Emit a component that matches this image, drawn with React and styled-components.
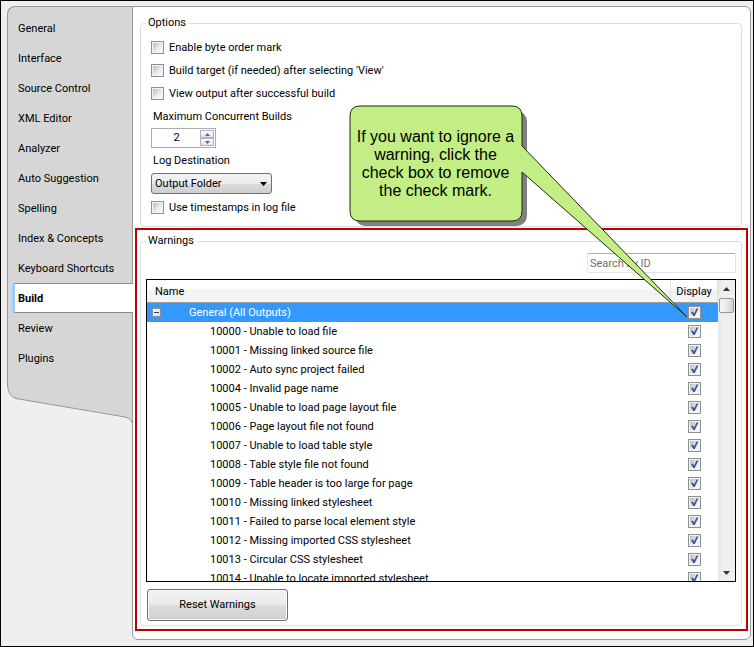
import React from "react";
import styled, { createGlobalStyle, css } from "styled-components";

const GlobalStyle = createGlobalStyle`
  *, *::before, *::after { box-sizing: border-box; }
  body {
    margin: 0;
    background: #efefef;
    color: #000;
    font: 11px/16px Roboto, Tahoma, sans-serif;
  }
  button, input, select { font: inherit; color: inherit; }
`;

const Window = styled.main`
  position: relative;
  display: flex;
  height: 100vh;
  min-height: 480px;
  padding: 5px 2px 6px 6px;
  border: 1px solid #000;
  background: #efefef;
`;

const Sidebar = styled.nav`
  display: flex;
  flex-direction: column;
  flex: none;
  width: 125px;
`;

const TabList = styled.ul`
  margin: 0;
  padding: 6px 0 8px 4px;
  list-style: none;
  background: #d6d6d6;
  border: 1px solid #999;
  border-width: 1px 0 0 1px;
  border-top-left-radius: 8px;
`;

const Tab = styled.a`
  display: flex;
  align-items: center;
  height: 30px;
  padding: 2px 0 0 6px;
  color: #000;
  text-decoration: none;
  white-space: nowrap;
  ${({ $active }) =>
    $active &&
    css`
      position: relative;
      margin-right: -1px;
      padding-left: 3px;
      border: 1px solid #8c8c8c;
      border-width: 1px 0 1px 3px;
      border-left-color: #99ccff;
      border-radius: 3px 0 0 3px;
      background: #fff;
      font-weight: bold;
    `}
`;

const SidebarFoot = styled.svg`
  display: block;
  flex: none;
`;

const Panel = styled.section`
  display: flex;
  flex-direction: column;
  flex: 1;
  min-width: 0;
  padding: 8px 2px 8px;
  background: #fff;
  border: 1px solid #999;
  border-radius: 0 6px 6px 6px;
`;

const Legend = styled.legend`
  margin-left: 0;
  padding: 0 3px 0 2px;
`;

const Group = styled.fieldset`
  min-width: 0;
  margin: 0;
  padding: 0 5px 4px;
  border: 1px solid #d5dfe5;
  border-radius: 4px;
`;

const OptionsGroup = styled(Group)`
  flex: none;
  margin: 0 6px 0 5px;
  padding: 5px 10px 7px;
  ${Legend} { margin-left: -5px; }
`;

const CheckRow = styled.label`
  display: flex;
  align-items: center;
  gap: 5px;
  height: 23px;
`;

const CheckWrap = styled.span`
  display: inline-grid;
  width: 13px;
  height: 13px;
  > * { grid-area: 1 / 1; }
`;

const CheckInput = styled.input`
  appearance: none;
  width: 13px;
  height: 13px;
  margin: 0;
  padding: 1px;
  border: 1px solid #8e8f8f;
  background:
    linear-gradient(135deg, #b4bcc6, #eceef0 60%, #fafafa) content-box,
    #f4f4f4;
`;

const CheckMark = styled.svg`
  width: 13px;
  height: 13px;
  pointer-events: none;
  visibility: hidden;
  ${CheckInput}:checked + & { visibility: visible; }
`;

const FieldLabel = styled.label`
  display: block;
  height: 23px;
  padding-left: 2px;
  line-height: 23px;
`;

const Spinner = styled.div`
  display: flex;
  width: 65px;
  height: 20px;
  margin-bottom: 1px;
  padding: 1px;
  border: 1px solid #abadb3;
  background: #fff;
`;

const SpinnerInput = styled.input`
  flex: 1;
  width: 0;
  padding: 0;
  border: 0;
  outline: 0;
  background: none;
  text-align: center;
`;

const SpinnerButtons = styled.div`
  display: grid;
  grid-template-rows: 1fr 1fr;
  width: 14px;
`;

const SpinnerButton = styled.button`
  display: grid;
  place-items: center;
  min-height: 0;
  padding: 0;
  border: 1px solid #b4b4b8;
  background: linear-gradient(#fafafa, #e4e4e6);
`;

const SelectWrap = styled.div`
  position: relative;
  width: 121px;
  margin: 1px 0 2px;
`;

const Select = styled.select`
  appearance: none;
  display: block;
  width: 100%;
  height: 21px;
  padding: 0 20px 0 3px;
  border: 1px solid #707070;
  border-radius: 3px;
  background: linear-gradient(#f3f3f3, #ebebeb 50%, #dcdcdc 50%, #cfcfcf);
`;

const SelectArrow = styled.svg`
  position: absolute;
  right: 5px;
  top: 9px;
  pointer-events: none;
`;

const Highlight = styled.div`
  display: flex;
  flex-direction: column;
  flex: 1;
  min-height: 0;
  margin-top: 1px;
  padding: 3px 4px 3px 3px;
  border: 2px solid #c00000;
`;

const WarningsGroup = styled(Group)`
  display: flex;
  flex-direction: column;
  flex: 1;
  min-height: 0;
`;

const Search = styled.input`
  flex: none;
  align-self: flex-end;
  width: 149px;
  height: 20px;
  margin: 4px 0 6px;
  padding: 0 2px;
  border: 1px solid #e2e3ea;
  border-top-color: #abadb3;
  border-radius: 2px;
  background: #fff;
  &::placeholder { color: #6d6d6d; opacity: 1; }
`;

const ListBox = styled.div`
  display: flex;
  flex: 1 1 0;
  min-height: 0;
  border: 1px solid #000;
  background: #fff;
`;

const Viewport = styled.div`
  flex: 1;
  min-width: 0;
  overflow: hidden;
`;

const Table = styled.table`
  width: 100%;
  table-layout: fixed;
  border-collapse: separate;
  border-spacing: 0;
`;

const DisplayCol = styled.col`
  width: 48px;
`;

const HeadCell = styled.th`
  height: 23px;
  padding: 2px 0 0 8px;
  border-bottom: 1px solid #a0a0a0;
  background: linear-gradient(#fff 40%, #f2f3f5 45%, #f2f3f5);
  font-weight: normal;
  text-align: left;
  ${({ $narrow }) =>
    $narrow &&
    css`
      padding-left: 0;
      border-left: 1px solid #dfe0e2;
      border-right: 1px solid #dfe0e2;
      text-align: center;
    `}
`;

const Row = styled.tr`
  ${({ $selected }) =>
    $selected &&
    css`
      background: #3399ff;
      color: #fff;
    `}
`;

const NameCell = styled.td`
  height: 19px;
  padding: 0 0 0 63px;
  line-height: 19px;
  white-space: nowrap;
`;

const TickCell = styled.td`
  height: 19px;
  padding: 0;
  line-height: 0;
  text-align: center;
`;

const GroupName = styled.div`
  display: flex;
  align-items: center;
  gap: 28px;
  margin-left: -58px;
`;

const Expander = styled.button`
  display: grid;
  place-items: center;
  width: 9px;
  height: 9px;
  padding: 0;
  border: 1px solid #919191;
  border-radius: 1px;
  background: linear-gradient(135deg, #fff, #dcdcdc);
`;

const ScrollBar = styled.div`
  display: flex;
  flex-direction: column;
  width: 17px;
  padding: 0 1px;
  background: linear-gradient(90deg, #e6e6e6, #f0f0f0 30%, #eee);
`;

const ScrollArrow = styled.button`
  display: grid;
  place-items: center;
  flex: none;
  height: 17px;
  padding: 0;
  border: 0;
  background: none;
  &:last-child { margin-top: auto; }
`;

const Thumb = styled.div`
  height: 15px;
  margin-top: 1px;
  border: 1px solid #979797;
  border-radius: 2px;
  background: linear-gradient(90deg, #f5f5f5, #e9e9eb 50%, #d2d2d4);
`;

const ResetButton = styled.button`
  flex: none;
  align-self: flex-start;
  width: 141px;
  height: 32px;
  margin: 7px 0 0 1px;
  padding: 0;
  border: 1px solid #707070;
  border-radius: 3px;
  background: linear-gradient(#f2f2f2, #ebebeb 48%, #dddddd 50%, #cfcfcf);
  box-shadow: inset 0 0 0 1px #f8f8f8;
`;

const Callout = styled.aside`
  position: absolute;
  top: 104px;
  right: 56px;
  width: 348px;
  height: 216px;
  pointer-events: none;
`;

const CalloutShape = styled.svg`
  position: absolute;
  inset: 0;
`;

const CalloutText = styled.p`
  position: relative;
  display: flex;
  align-items: center;
  justify-content: center;
  width: 173px;
  height: 117px;
  margin: 0;
  font: 16px/18px "Liberation Sans", Arial, sans-serif;
  text-align: center;
  white-space: pre-line;
`;

const tabs = [
  "General", "Interface", "Source Control", "XML Editor", "Analyzer",
  "Auto Suggestion", "Spelling", "Index & Concepts", "Keyboard Shortcuts",
  "Build", "Review", "Plugins",
];

const warnings = [
  "10000 - Unable to load file",
  "10001 - Missing linked source file",
  "10002 - Auto sync project failed",
  "10004 - Invalid page name",
  "10005 - Unable to load page layout file",
  "10006 - Page layout file not found",
  "10007 - Unable to load table style",
  "10008 - Table style file not found",
  "10009 - Table header is too large for page",
  "10010 - Missing linked stylesheet",
  "10011 - Failed to parse local element style",
  "10012 - Missing imported CSS stylesheet",
  "10013 - Circular CSS stylesheet",
  "10014 - Unable to locate imported stylesheet",
];

function Check(props) {
  return (
    <CheckWrap>
      <CheckInput type="checkbox" {...props} />
      <CheckMark viewBox="0 0 13 13" aria-hidden="true">
        <path d="M3 6 L5 5.6 L6 7.6 L8.6 2.4 L10.4 2.4 L6.8 10 L5.2 10 Z" fill="#3f5796" />
      </CheckMark>
    </CheckWrap>
  );
}

function Option({ children }) {
  return (
    <CheckRow>
      <Check />
      {children}
    </CheckRow>
  );
}

function Arrow({ down, color = "#4a6ab0", w = 5, h = 3 }) {
  const d = down ? `M0 0H${w}L${w / 2} ${h}Z` : `M0 ${h}H${w}L${w / 2} 0Z`;
  return (
    <svg width={w} height={h} aria-hidden="true">
      <path d={d} fill={color} />
    </svg>
  );
}

export default function App() {
  return (
    <>
      <GlobalStyle />
      <Window>
        <Sidebar aria-label="Project properties">
          <TabList>
            {tabs.map((tab) => (
              <li key={tab}>
                <Tab href="#" $active={tab === "Build"} aria-current={tab === "Build" ? "page" : undefined}>
                  {tab}
                </Tab>
              </li>
            ))}
          </TabList>
          <SidebarFoot width="125" height="42" aria-hidden="true">
            <path d="M0.5 0 V4 Q1 15 9 17.5 L118 36 Q124.500 37.500 125 42 V0" fill="#d6d6d6" />
            <path d="M0.5 0 V4 Q1 15 9 17.5 L118 36 Q124.500 37.500 125 42" fill="none" stroke="#999" />
          </SidebarFoot>
        </Sidebar>

        <Panel>
          <OptionsGroup>
            <Legend>Options</Legend>
            <Option>Enable byte order mark</Option>
            <Option>Build target (if needed) after selecting 'View'</Option>
            <Option>View output after successful build</Option>
            <FieldLabel htmlFor="builds">Maximum Concurrent Builds</FieldLabel>
            <Spinner>
              <SpinnerInput id="builds" type="text" inputMode="numeric" defaultValue="2" />
              <SpinnerButtons>
                <SpinnerButton type="button" aria-label="Increase"><Arrow /></SpinnerButton>
                <SpinnerButton type="button" aria-label="Decrease"><Arrow down /></SpinnerButton>
              </SpinnerButtons>
            </Spinner>
            <FieldLabel htmlFor="log">Log Destination</FieldLabel>
            <SelectWrap>
              <Select id="log" defaultValue="Output Folder">
                <option>Output Folder</option>
              </Select>
              <SelectArrow width="7" height="4" aria-hidden="true">
                <path d="M0 0H7L3.500 4Z" />
              </SelectArrow>
            </SelectWrap>
            <Option>Use timestamps in log file</Option>
          </OptionsGroup>

          <Highlight>
            <WarningsGroup>
              <Legend>Warnings</Legend>
              <Search type="text" placeholder="Search by ID" aria-label="Search by ID" />
              <ListBox>
                <Viewport>
                  <Table>
                    <colgroup>
                      <col />
                      <DisplayCol />
                    </colgroup>
                    <thead>
                      <tr>
                        <HeadCell>Name</HeadCell>
                        <HeadCell $narrow>Display</HeadCell>
                      </tr>
                    </thead>
                    <tbody>
                      <Row $selected>
                        <NameCell>
                          <GroupName>
                            <Expander type="button" aria-label="Collapse">
                              <svg width="5" height="1" aria-hidden="true">
                                <path d="M0 0H5V1H0Z" fill="#2b3f86" />
                              </svg>
                            </Expander>
                            General (All Outputs)
                          </GroupName>
                        </NameCell>
                        <TickCell><Check defaultChecked aria-label="General (All Outputs)" /></TickCell>
                      </Row>
                      {warnings.map((name) => (
                        <Row key={name}>
                          <NameCell>{name}</NameCell>
                          <TickCell><Check defaultChecked aria-label={name} /></TickCell>
                        </Row>
                      ))}
                    </tbody>
                  </Table>
                </Viewport>
                <ScrollBar>
                  <ScrollArrow type="button" aria-label="Scroll up"><Arrow color="#333" w={7} h={4} /></ScrollArrow>
                  <Thumb />
                  <ScrollArrow type="button" aria-label="Scroll down"><Arrow down color="#333" w={7} h={4} /></ScrollArrow>
                </ScrollBar>
              </ListBox>
              <ResetButton type="button">Reset Warnings</ResetButton>
            </WarningsGroup>
          </Highlight>
        </Panel>

        <Callout>
          <CalloutShape width="348" height="216" aria-hidden="true">
            <rect x="6" y="6" width="172" height="115" rx="10" fill="#808080" />
            <path
              d="M11 1 H163 Q173 1 173 11 V41 L338 212 L173 67 V106 Q173 116 163 116 H11 Q1 116 1 106 V11 Q1 1 11 1 Z"
              fill="#c2ee85"
              stroke="#1c2b10"
            />
          </CalloutShape>
          <CalloutText>{"If you want to ignore a\nwarning, click the\ncheck box to remove\nthe check mark."}</CalloutText>
        </Callout>
      </Window>
    </>
  );
}
